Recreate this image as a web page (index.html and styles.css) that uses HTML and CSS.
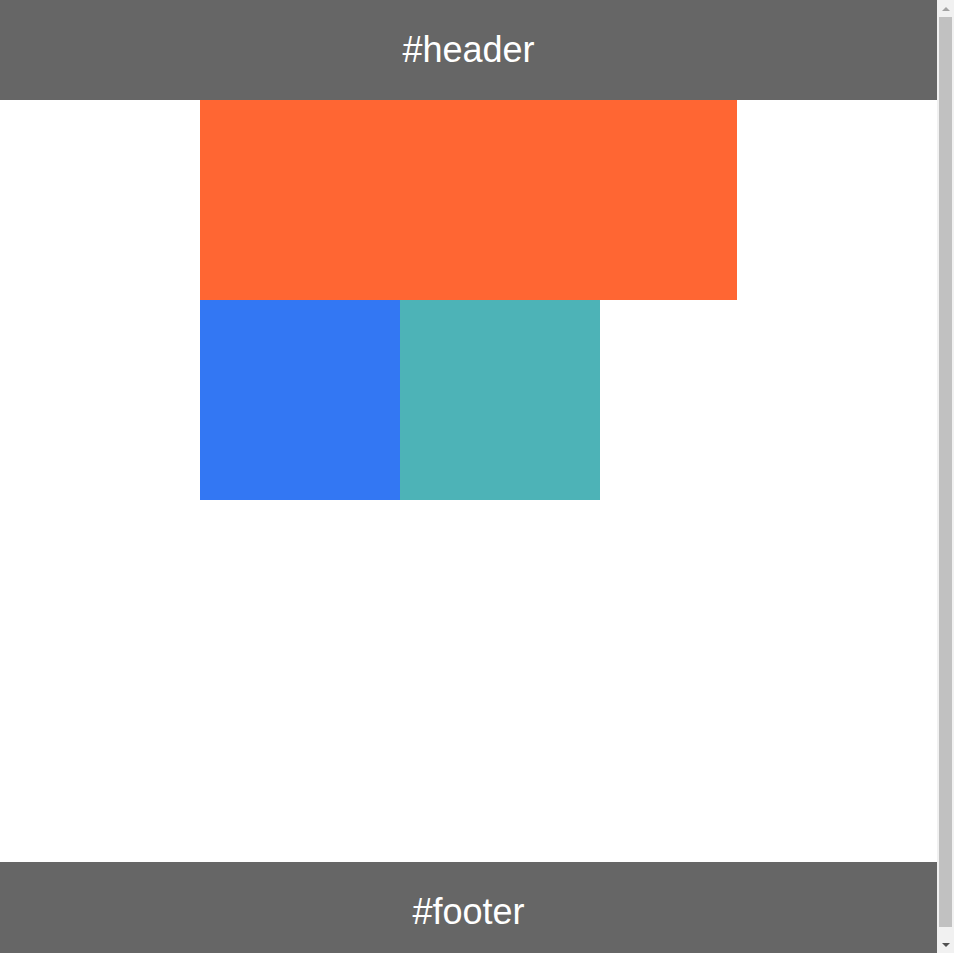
FILE: index.html
```html
<!DOCTYPE html>
<html>
<head>
<meta charset="utf-8">
<link rel="stylesheet" href="styles.css">
</head>
<body>
<div class="page">
  <div class="header">#header</div>
  <div class="main">
    <div class="wide"></div>
    <div class="row">
      <div class="blue"></div>
      <div class="teal"></div>
    </div>
  </div>
  <div class="footer">#footer</div>
</div>
<div class="scrollbar">
  <div class="arrow up"></div>
  <div class="track"><div class="thumb"></div></div>
  <div class="arrow down"></div>
</div>
</body>
</html>
```
FILE: styles.css
```css
html, body {
  margin: 0;
  padding: 0;
}
body {
  font-family: "Liberation Sans", Arial, sans-serif;
  color: #fff;
}
.page {
  width: 937px;
}
.header {
  height: 100px;
  line-height: 100px;
  background: #666666;
  text-align: center;
  font-size: 36px;
}
.main {
  height: 762px;
  padding: 0 200px;
}
.wide {
  height: 200px;
  background: #ff6633;
}
.row {
  display: flex;
}
.blue {
  width: 200px;
  height: 200px;
  background: #3377f3;
}
.teal {
  width: 200px;
  height: 200px;
  background: #4db3b7;
}
.footer {
  height: 100px;
  line-height: 100px;
  background: #666666;
  text-align: center;
  font-size: 36px;
}
.scrollbar {
  position: fixed;
  top: 0;
  right: 0;
  width: 17px;
  height: 100vh;
  background: #f1f1f1;
  display: flex;
  flex-direction: column;
}
.arrow {
  height: 17px;
  display: flex;
  align-items: center;
  justify-content: center;
}
.arrow::before {
  content: "";
  width: 0;
  height: 0;
  border-left: 4px solid transparent;
  border-right: 4px solid transparent;
}
.up::before {
  border-bottom: 4px solid #a3a3a3;
}
.down::before {
  border-top: 4px solid #505050;
}
.track {
  flex: 1;
  padding: 0 2px 9px;
  display: flex;
}
.thumb {
  flex: 1;
  background: #c1c1c1;
}
```
